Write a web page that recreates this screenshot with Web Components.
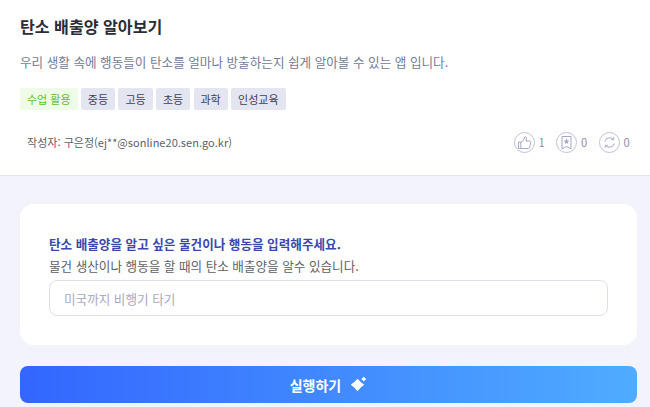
<!DOCTYPE html>
<html lang="ko"><head><meta charset="utf-8">
<style>
html,body{margin:0;padding:0;height:407px;overflow:hidden;background:#f3f4fb;font-family:"Noto Sans CJK KR","Noto Sans",sans-serif}
</style></head><body>
<app-page>
  <info-header title-text="탄소 배출양 알아보기" desc="우리 생활 속에 행동들이 탄소를 얼마나 방출하는지 쉽게 알아볼 수 있는 앱 입니다." author="작성자: 구은정(ej**@sonline20.sen.go.kr)">
    <tag-chip slot="tags" kind="green">수업 활용</tag-chip>
    <tag-chip slot="tags">중등</tag-chip>
    <tag-chip slot="tags">고등</tag-chip>
    <tag-chip slot="tags">초등</tag-chip>
    <tag-chip slot="tags">과학</tag-chip>
    <tag-chip slot="tags">인성교육</tag-chip>
    <stat-item slot="stats" icon="like" count="1"></stat-item>
    <stat-item slot="stats" icon="mark" count="0"></stat-item>
    <stat-item slot="stats" icon="sync" count="0"></stat-item>
  </info-header>
  <form-card heading="탄소 배출양을 알고 싶은 물건이나 행동을 입력해주세요." sub="물건 생산이나 행동을 할 때의 탄소 배출양을 알수 있습니다." placeholder="미국까지 비행기 타기"></form-card>
  <run-button>실행하기</run-button>
</app-page>
<script>
const def=(name,html,init)=>customElements.define(name,class extends HTMLElement{
  connectedCallback(){ if(this.shadowRoot)return; const r=this.attachShadow({mode:'open'}); r.innerHTML=typeof html==='function'?html(this):html; }
});
def('app-page',`<style>:host{display:block;width:650px}</style><slot></slot>`);
def('info-header',e=>`<style>
:host{display:block;box-sizing:border-box;height:176px;background:#fff;border-bottom:1px solid #e4e5ec;padding:15px 20px 0}
h1{margin:0;font-size:16.100px;line-height:23px;font-weight:700;color:#2b2d36}
p{margin:14px 0 0;font-size:12.600px;line-height:20px;color:#737b96}
.tags{display:flex;gap:3.3px;margin-top:16px}
.foot{display:flex;justify-content:space-between;align-items:center;margin-top:21px;padding:0 0 0 7px;height:22px}
.author{font-size:11px;color:#5e6068;line-height:18px;letter-spacing:.03px}
.stats{display:flex;gap:11px}
</style>
<h1>${e.getAttribute('title-text')}</h1><p>${e.getAttribute('desc')}</p>
<div class="tags"><slot name="tags"></slot></div>
<div class="foot"><span class="author">${e.getAttribute('author')}</span><span class="stats"><slot name="stats"></slot></span></div>`);
def('tag-chip',e=>`<style>
:host{display:block;box-sizing:border-box;height:22px;padding:0 7px;border-radius:2px;font-size:11px;line-height:22px;white-space:nowrap;
background:${e.getAttribute('kind')==='green'?'#eefbe6':'#e3e5f1'};color:${e.getAttribute('kind')==='green'?'#5fc02d':'#3f4156'}}
</style><slot></slot>`);
const icons={
 like:'<path d="M4.500 10h2.300v6.500H4.500zM6.800 10.500l2.700-2.300 1.400-3.400c1-.3 1.800.5 1.600 1.600L12 9h3.500c.9 0 1.400.7 1.200 1.500l-1 4.800c-.2.800-.7 1.200-1.500 1.200H6.800"/>',
 mark:'<path d="M6 4.500h9v12.500l-4.500-2.600L6 17z"/><path fill="#a5a8c6" stroke="none" d="M10.500 6.600l.9 1.800 2 .3-1.500 1.400.4 2-1.800-1-1.800 1 .4-2-1.500-1.400 2-.3z"/>',
 sync:'<path d="M5.800 9.500A4.900 4.900 0 0 1 14.300 7.500M15.200 11.500A4.900 4.900 0 0 1 6.700 13.500"/><path d="M14.700 5.300v2.400h-2.400M6.300 15.700v-2.400h2.400"/>'
};
def('stat-item',e=>`<style>
:host{display:flex;align-items:center;gap:4px;font-size:11.200px;color:#8d8fae;line-height:21px}
.c{box-sizing:border-box;width:21px;height:21px;border:1px solid #bfc1d6;border-radius:50%;display:block}
svg{display:block;margin:-1px;width:21px;height:21px;fill:none;stroke:#a5a8c6;stroke-width:1}
span{min-width:6.5px}
</style><div class="c"><svg viewBox="0 0 21 21">${icons[e.getAttribute('icon')]}</svg></div><span>${e.getAttribute('count')}</span>`);
def('form-card',e=>`<style>
:host{display:block;box-sizing:border-box;width:617px;height:141px;margin:28px 0 0 20px;background:#fff;border-radius:14px;padding:30px 29px 0}
.h{font-size:12.600px;line-height:20px;font-weight:700;color:#3a48ad}
.s{font-size:12.600px;line-height:20px;color:#5e6068;margin-top:2px}
input{display:block;box-sizing:border-box;width:100%;height:36px;margin-top:4px;border:1px solid #dfe0e7;border-radius:8px;padding:0 14px;font:12.600px "Noto Sans CJK KR",sans-serif;background:#fff;outline:none}
input::placeholder{color:#a9a9c0;opacity:1}
</style><div class="h">${e.getAttribute('heading')}</div><div class="s">${e.getAttribute('sub')}</div><input placeholder="${e.getAttribute('placeholder')}">`);
def('run-button',`<style>
:host{display:flex;align-items:center;justify-content:center;gap:9px;box-sizing:border-box;width:617px;height:37px;margin:21px 0 0 20px;border-radius:8px;background:linear-gradient(90deg,#3366ff,#4facff);color:#fff;font-size:14px;font-weight:700}
svg{width:17px;height:17px;display:block;fill:#fff}
</style><slot></slot><svg viewBox="0 0 17 17"><path d="M7.500 2.800Q10.300 6 14.200 8.800Q10.300 11.600 7.500 15.200Q4.700 11.600 .8 8.800Q4.700 6 7.500 2.800z"/><path d="M13.800 .5Q14.800 2 16.400 3Q14.800 4 13.800 5.500Q12.800 4 11.200 3Q12.800 2 13.800 .5z"/></svg>`);
</script>
</body></html>
